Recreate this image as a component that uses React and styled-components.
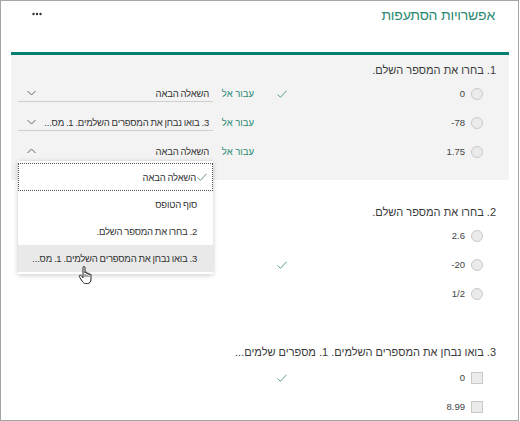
import React from "react";
import styled, { createGlobalStyle } from "styled-components";

const Global = createGlobalStyle`
  html, body { margin: 0; padding: 0; background: #fff; }
  body { font-family: "Liberation Sans", "DejaVu Sans", sans-serif; }
`;

const TEAL = "#2b8a73";

const Frame = styled.div`
  position: relative;
  width: 519px;
  height: 421px;
  box-sizing: border-box;
  border: 1px solid #a6a6a6;
  background: #fff;
  direction: rtl;
  overflow: hidden;
  font-family: "Liberation Sans", "DejaVu Sans", sans-serif;
`;

const Header = styled.header`
  display: flex;
  justify-content: space-between;
  align-items: flex-start;
  height: 51px;
  box-sizing: border-box;
  padding: 4px 23px 0 31px;
`;

const Title = styled.h1`
  margin: 0;
  font-size: 14px;
  line-height: 20px;
  letter-spacing: -0.2px;
  font-weight: normal;
  color: ${TEAL};
`;

const MoreButton = styled.span`
  display: flex;
  margin-top: 7px;
  width: 10px;
  height: 4px;
`;

const Panel = styled.section`
  margin: 0 9px 0 10px;
  border-top: 3px solid #03806f;
`;

const Section = styled.div`
  background: ${(p) => (p.$active ? "#f3f3f3" : "transparent")};
  padding: ${(p) => p.$pad};
`;

const QuestionTitle = styled.div`
  font-size: 11px;
  line-height: 18px;
  color: #3a3a3a;
  padding-right: 13px;
  margin-bottom: ${(p) => p.$mb || 0}px;
`;

const OptionRow = styled.div`
  display: grid;
  grid-template-columns: 12px 184px 10px 1fr 195px;
  align-items: center;
  height: 29px;
  padding: 0 26px 0 7px;
`;

const Radio = styled.span`
  width: 12px;
  height: 12px;
  box-sizing: border-box;
  border: 1px solid #c9c9c9;
  background: #ebebeb;
  border-radius: ${(p) => (p.$square ? "0" : "50%")};
`;

const Label = styled.span`
  justify-self: start;
  padding-right: 6px;
  font-size: 9.5px;
  color: #444;
  direction: ltr;
  unicode-bidi: isolate;
`;

const CheckCell = styled.span`
  display: flex;
  align-items: center;
`;

const GoTo = styled.span`
  justify-self: start;
  padding-right: 23px;
  font-size: 9.5px;
  color: ${TEAL};
  white-space: nowrap;
`;

const Dropdown = styled.div`
  position: relative;
  display: flex;
  align-items: center;
  justify-content: space-between;
  height: 17px;
  box-sizing: border-box;
  padding: 0 4px 0 9px;
  border-bottom: 1px solid ${(p) => (p.$open ? "transparent" : "#cfcfcf")};
`;

const DropdownValue = styled.span`
  flex: 1;
  min-width: 0;
  overflow: hidden;
  white-space: nowrap;
  font-size: 9.5px;
  letter-spacing: -0.2px;
  word-spacing: -0.5px;
  color: #333;
`;

const Chevron = styled.svg`
  flex: none;
  margin-right: 6px;
`;

const Menu = styled.ul`
  position: absolute;
  top: calc(100% + 2px);
  left: 0;
  right: 0;
  z-index: 2;
  margin: 0;
  padding: 2px 0;
  list-style: none;
  background: #fff;
  box-shadow: 0 1px 5px rgba(0, 0, 0, 0.22);
`;

const MenuItem = styled.li`
  display: flex;
  align-items: center;
  height: ${(p) => (p.$focused ? 28 : 27)}px;
  box-sizing: border-box;
  padding-right: 4px;
  font-size: 9.5px;
  letter-spacing: -0.2px;
  word-spacing: -0.5px;
  color: #333;
  white-space: nowrap;
  overflow: hidden;
  background: ${(p) => (p.$hover ? "#e9e9e9" : "#fff")};
  border: ${(p) => (p.$focused ? "1px dotted #555" : "none")};
`;

const MenuCheck = styled.span`
  display: flex;
  align-items: center;
  justify-content: center;
  width: 12px;
  flex: none;
`;

const Pointer = styled.svg`
  position: absolute;
  left: 77px;
  top: 265px;
  z-index: 3;
`;

const Check = ({ color = "#5a9e94" }) => (
  <svg width="10" height="8" viewBox="0 0 10 8">
    <polyline points="0.5,4.5 3.5,7.3 9.5,0.7" fill="none" stroke={color} strokeWidth="1" />
  </svg>
);

const ChevronIcon = ({ up }) => (
  <Chevron width="9" height="6" viewBox="0 0 9 6">
    <polyline
      points={up ? "0.5,5 4.5,1 8.5,5" : "0.5,1 4.5,5 8.5,1"}
      fill="none"
      stroke="#666"
      strokeWidth="1"
    />
  </Chevron>
);

const menuOptions = [
  "השאלה הבאה",
  "סוף הטופס",
  "2. בחרו את המספר השלם.",
  "3. בואו נבחן את המספרים השלמים. 1. מס...",
];

const Option = ({ label, square, correct, dropdown }) => (
  <OptionRow>
    <Radio $square={square} />
    <Label>{label}</Label>
    <CheckCell>{correct && <Check />}</CheckCell>
    {dropdown ? <GoTo>עבור אל</GoTo> : <span />}
    {dropdown ? (
      <Dropdown $open={dropdown.open}>
        <DropdownValue>{dropdown.value}</DropdownValue>
        <ChevronIcon up={dropdown.open} />
        {dropdown.open && (
          <Menu>
            {menuOptions.map((o, i) => (
              <MenuItem key={o} $focused={i === 0} $hover={i === 3}>
                <MenuCheck>{i === 0 && <Check color="#6b8f88" />}</MenuCheck>
                {o}
              </MenuItem>
            ))}
          </Menu>
        )}
      </Dropdown>
    ) : (
      <span />
    )}
  </OptionRow>
);

export default function App() {
  return (
    <>
      <Global />
      <Frame>
        <Header>
          <Title>אפשרויות הסתעפות</Title>
          <MoreButton>
            <svg width="10" height="4" viewBox="0 0 10 4">
              <circle cx="1.5" cy="2" r="1.2" fill="#333" />
              <circle cx="5" cy="2" r="1.2" fill="#333" />
              <circle cx="8.5" cy="2" r="1.2" fill="#333" />
            </svg>
          </MoreButton>
        </Header>
        <Panel>
          <Section $active $pad="6px 0 14px">
            <QuestionTitle>1. בחרו את המספר השלם.</QuestionTitle>
            <Option label="0" correct dropdown={{ value: "השאלה הבאה" }} />
            <Option
              label="-78"
              dropdown={{ value: "3. בואו נבחן את המספרים השלמים. 1. מס..." }}
            />
            <Option label="1.75" dropdown={{ value: "השאלה הבאה", open: true }} />
          </Section>
          <Section $pad="23px 0 14px">
            <QuestionTitle>2. בחרו את המספר השלם.</QuestionTitle>
            <Option label="2.6" />
            <Option label="-20" correct />
            <Option label="1/2" />
          </Section>
          <Section $pad="21px 0 0">
            <QuestionTitle $mb={2}>3. בואו נבחן את המספרים השלמים. 1. מספרים שלמים...</QuestionTitle>
            <Option label="0" square correct />
            <Option label="8.99" square />
          </Section>
        </Panel>
        <Pointer width="15" height="19" viewBox="0 0 15 19">
          <path
            d="M5 1.5 C5 0.8 5.5 0.5 6 0.5 C6.5 0.5 7 0.8 7 1.5 V7 C7 6.4 7.5 6 8 6 C8.5 6 9 6.4 9 7 V8 C9 7.4 9.5 7 10 7 C10.5 7 11 7.4 11 8 V9 C11 8.4 11.5 8 12 8 C12.5 8 13 8.4 13 9 V13 C13 16 11.5 17.5 9.5 17.5 H7.5 C6 17.5 5 16.5 4 15 L1.5 11 C1 10.2 1.3 9.4 2 9.2 C2.6 9 3.2 9.4 3.6 9.9 L5 11.8 Z"
            fill="#fff"
            stroke="#222"
            strokeWidth="1"
            strokeLinejoin="round"
          />
          <path d="M7 8 V11 M9 8.5 V11 M11 9.5 V11" stroke="#222" strokeWidth="0.8" />
        </Pointer>
      </Frame>
    </>
  );
}
